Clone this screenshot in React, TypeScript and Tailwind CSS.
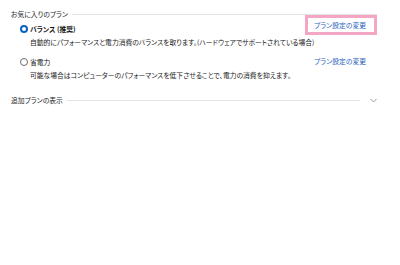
const font = "font-['Noto_Sans_CJK_JP','Noto_Sans',sans-serif] [font-feature-settings:'palt']";

function Radio({ checked }: { checked: boolean }) {
  return checked ? (
    <span className="block w-[8px] h-[8px] shrink-0 rounded-full border-[2.5px] border-[#0a62c6] bg-white" />
  ) : (
    <span className="block w-[8px] h-[8px] shrink-0 rounded-full border border-[#6b6b6b] bg-white" />
  );
}

function SectionHeader({ label, chevron }: { label: string; chevron?: boolean }) {
  return (
    <div className="flex items-center h-[10px] gap-[4px]">
      <span className="text-[#262626] leading-[10px] whitespace-nowrap">{label}</span>
      <div className="flex-1 h-px bg-[#e3e3e3]" />
      {chevron && (
        <svg width="7" height="5" viewBox="0 0 7 5" className="ml-[6px] shrink-0">
          <path d="M0.5 1 L3.5 4 L6.5 1" fill="none" stroke="#8a8a8a" strokeWidth="0.9" />
        </svg>
      )}
    </div>
  );
}

export default function App() {
  return (
    <div className={`w-[400px] h-[265px] bg-white text-[6.8px] pl-[11px] pr-[23px] pt-[9px] ${font}`}>
      <SectionHeader label="お気に入りのプラン" />

      {/* バランス */}
      <div className="flex justify-between items-start mt-[-4px] pl-[9px]">
        <div className="mt-[9px] min-w-0">
          <div className="flex items-center gap-[2px] h-[10px]">
            <Radio checked />
            <span className="font-bold text-[#111] leading-[10px]">バランス (推奨)</span>
          </div>
          <p className="pl-[10px] mt-[3px] text-[#1a1a1a] leading-[10px] whitespace-nowrap">
            自動的にパフォーマンスと電力消費のバランスを取ります。(ハードウェアでサポートされている場合)
          </p>
        </div>
        <a className="block shrink-0 border-[3px] border-[#f4a6c5] pl-[6px] pr-[8px] py-[2px] leading-[10px] text-[#1f5fbf] whitespace-nowrap">
          プラン設定の変更
        </a>
      </div>

      {/* 省電力 */}
      <div className="flex justify-between items-start mt-[6px] pl-[9px]">
        <div className="mt-[4px] min-w-0">
          <div className="flex items-center gap-[2px] h-[10px]">
            <Radio checked={false} />
            <span className="text-[#111] leading-[10px]">省電力</span>
          </div>
          <p className="pl-[10px] mt-[3px] text-[#1a1a1a] leading-[10px] whitespace-nowrap">
            可能な場合はコンピューターのパフォーマンスを低下させることで、電力の消費を抑えます。
          </p>
        </div>
        <a className="block shrink-0 pl-[9px] pr-[11px] py-[3px] leading-[10px] text-[#1f5fbf] whitespace-nowrap">
          プラン設定の変更
        </a>
      </div>

      <div className="mt-[15px]">
        <SectionHeader label="追加プランの表示" chevron />
      </div>
    </div>
  );
}
